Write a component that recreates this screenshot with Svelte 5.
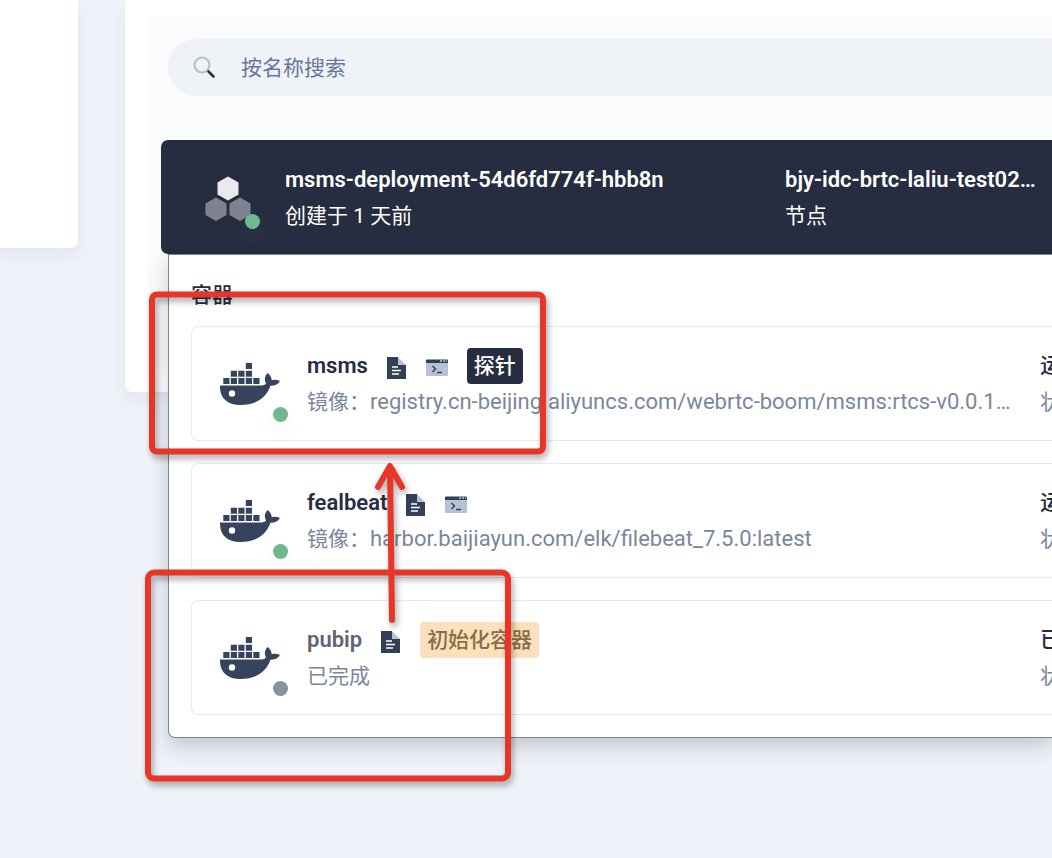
<script>
  const containers = [
    { name: 'msms', label: '镜像：', image: 'registry.cn-beijing.aliyuncs.com/webrtc-boom/msms:rtcs-v0.0.1…', terminal: true, tag: '探针', tone: 'dark', state: '运行中', done: false },
    { name: 'fealbeat', label: '镜像：', image: 'harbor.baijiayun.com/elk/filebeat_7.5.0:latest', terminal: true, tag: '', tone: '', state: '运行中', done: false },
    { name: 'pubip', label: '已完成', image: '', terminal: false, tag: '初始化容器', tone: 'warm', state: '已完成', done: true }
  ];
  let query = $state('');
</script>

<div class="page">
  <aside class="side"></aside>
  <main class="panel">
    <section class="list">
      <label class="search">
        <svg width="24" height="24" viewBox="0 0 24 24" aria-hidden="true">
          <circle cx="9" cy="9" r="7.500" fill="none" stroke="#b6bfca" stroke-width="2.200" />
          <path d="M15.500 15.500l5 5" stroke="#29323f" stroke-width="2.600" stroke-linecap="round" />
        </svg>
        <input type="text" placeholder="按名称搜索" aria-label="按名称搜索" bind:value={query} />
      </label>

      <article class="pod">
        <header class="pod-head">
          <div class="icon">
            <svg width="46" height="46" viewBox="0 0 46 46" aria-hidden="true">
              <path d="M23 1.500l10.500 6v12L23 25.500l-10.500-6v-12z" fill="#eaeaed" />
              <path d="M11 22.500l10.500 6V40L11 46 .5 40V28.500z" fill="#80838f" />
              <path d="M35 22.500l10.500 6V40L35 46l-10.500-6V28.500z" fill="#80838f" />
            </svg>
            <i class="dot"></i>
          </div>
          <div class="pod-cols">
            <div class="cell"><strong>msms-deployment-54d6fd774f-hbb8n</strong><p>创建于 1 天前</p></div>
            <div class="cell"><strong>bjy-idc-brtc-laliu-test02…</strong><p>节点</p></div>
          </div>
        </header>

        <div class="details">
          <h2>容器</h2>
          <ul>
            {#each containers as c}
              <li>
                <div class="icon whale">
                  <svg width="60" height="44" viewBox="0 0 60 44" fill="#36435c" aria-hidden="true">
                    <path d="M25.800 1h6.200v6h-6.200zM10.800 8.800H17v6h-6.200zM18.300 8.800h6.200v6h-6.200zM25.800 8.800h6.200v6h-6.200zM3.300 16h6.200v6H3.300zM10.800 16H17v6h-6.200zM18.300 16h6.200v6h-6.200zM25.800 16h6.200v6h-6.200zM33.300 16h6.200v6h-6.200z" />
                    <path d="M0 23.500H40c3 0 5-.5 6-2-2-3.500-1.500-7 1.500-10.500 2.800 2 4 4.200 4.200 7.200 3-.8 5.500-.5 8.300.8-2 3.300-5.300 4.800-9.500 4.800C46 36 36 43 20.500 43 7.500 43-.5 36 0 23.500z" />
                    <circle cx="12" cy="31.500" r="3.200" fill="#fff" />
                  </svg>
                  <i class="dot" class:done={c.done}></i>
                </div>
                <div class="cell info">
                  <div class="title">
                    <strong class:muted={c.done}>{c.name}</strong>
                    <button aria-label="容器日志">
                      <svg width="20" height="22" viewBox="0 0 20 22" aria-hidden="true">
                        <path d="M0 0h11v8h8v14H0z" fill="#324057" />
                        <path d="M11 0l8 8h-8z" fill="#b6c2d1" />
                        <path d="M5 10h6M5 13.500h9M5 17h7" stroke="#fff" stroke-width="1.600" />
                      </svg>
                    </button>
                    {#if c.terminal}
                      <button aria-label="终端">
                        <svg width="22" height="22" viewBox="0 0 22 22" aria-hidden="true">
                          <path d="M0 6h22v12a1 1 0 0 1-1 1H1a1 1 0 0 1-1-1z" fill="#b6c2d1" />
                          <path d="M1 2.500h20a1 1 0 0 1 1 1v2.500H0V3.500a1 1 0 0 1 1-1z" fill="#324057" />
                          <path d="M14 4h2M17 4h2M20 4h1" stroke="#b6c2d1" stroke-width="1.500" />
                          <path d="M6.500 9L9.500 12l-3 3M11 15.500h5" fill="none" stroke="#324057" stroke-width="1.400" />
                        </svg>
                      </button>
                    {/if}
                    {#if c.tag}<span class="tag {c.tone}">{c.tag}</span>{/if}
                  </div>
                  <p>{c.label}<span class="image">{c.image}</span></p>
                </div>
                <div class="cell status"><strong>{c.state}</strong><p>状态</p></div>
              </li>
            {/each}
          </ul>
        </div>
      </article>
    </section>
  </main>

  <svg class="marks" width="600" height="858" viewBox="0 0 600 858" aria-hidden="true">
    <rect x="152" y="294.500" width="391" height="157" rx="5" />
    <rect x="148" y="572.500" width="360" height="206" rx="6" />
    <path d="M392 620L390 467M378 487l12-21 12 21" />
  </svg>
</div>

<style>
  :global(body) { margin: 0; background: #eff2f8; }
  .page {
    position: relative;
    display: flex;
    align-items: flex-start;
    gap: 47px;
    min-height: 100vh;
    overflow: hidden;
    color: #242e42;
    font: 22px/36px Roboto, "Noto Sans CJK SC", sans-serif;
  }
  .side {
    flex: 0 0 78px;
    height: 248px;
    background: #fff;
    border-radius: 0 0 7px 0;
    box-shadow: 0 8px 16px rgba(36, 46, 66, .06);
  }
  .panel {
    flex: 1;
    min-width: 0;
    padding: 17px 0 23px 23px;
    box-sizing: border-box;
    background: #fff;
    border-radius: 0 0 0 7px;
    box-shadow: 0 8px 16px rgba(36, 46, 66, .06);
  }
  .list { padding: 22px 0 115px 13px; background: #fafbfd; }
  .search {
    display: flex;
    align-items: center;
    gap: 24px;
    height: 57px;
    margin-left: 7px;
    padding-left: 25px;
    border-radius: 29px 0 0 29px;
    background: #eff2f7;
  }
  input {
    flex: 1;
    min-width: 0;
    padding: 0;
    border: 0;
    outline: 0;
    background: none;
    color: #36435c;
    font: inherit;
    font-size: 21px;
  }
  input::placeholder { color: #68779a; opacity: 1; }
  .pod { position: relative; margin-top: 44px; }
  .pod-head {
    display: flex;
    align-items: center;
    height: 114px;
    padding: 2px 0 0 44px;
    box-sizing: border-box;
    border-radius: 7px 0 0 7px;
    background: #272d40;
    color: #fff;
  }
  .icon { position: relative; display: flex; flex: none; }
  .icon .dot {
    position: absolute;
    right: -9px;
    bottom: -8px;
    width: 15px;
    height: 15px;
    border-radius: 50%;
    background: #6fba8c;
    box-shadow: 0 8px 16px rgba(85, 188, 138, .1);
  }
  .whale .dot { right: -8px; bottom: -16px; }
  .icon .dot.done { background: #88919f; box-shadow: none; }
  .pod-cols {
    flex: 1;
    display: grid;
    grid-template-columns: minmax(0, 500fr) minmax(0, 267fr);
    margin-left: 34px;
  }
  .cell { min-width: 0; white-space: nowrap; }
  strong { display: block; font-weight: 600; }
  p { margin: 0; font-size: 21px; }
  .details {
    position: absolute;
    top: 114px;
    left: 7px;
    right: 0;
    padding: 22px 0 22px 22px;
    border: 1px solid #7e8494;
    border-right: 0;
    border-radius: 0 0 0 7px;
    box-sizing: border-box;
    background: #fff;
    box-shadow: 0 8px 20px rgba(36, 46, 66, .22);
  }
  h2 { margin: 0; font-size: 21px; line-height: 36px; font-weight: 500; }
  ul {
    display: grid;
    gap: 22px;
    margin: 13px 0 0;
    padding: 0;
    list-style: none;
  }
  li {
    display: flex;
    align-items: center;
    height: 115px;
    padding: 1px 0 0 28px;
    border: 1px solid #e7e9ed;
    border-right: 0;
    border-radius: 7px 0 0 7px;
    box-sizing: border-box;
  }
  .info { flex: 1; margin: 0 28px 0 27px; }
  .title { display: flex; align-items: center; height: 36px; }
  .muted { color: #5f6473; }
  li p { color: #79879c; }
  .image { font-size: 22px; }
  button {
    display: flex;
    margin-left: 19px;
    padding: 4px 0 0;
    border: 0;
    background: none;
  }
  .tag {
    margin-left: 19px;
    padding: 0 7px;
    border-radius: 4px;
    font-size: 21px;
    font-weight: 500;
  }
  .dark { background: #272d40; color: #fff; }
  .warm { background: #fbe0be; color: #8a6d45; }
  .status { flex: 0 0 12px; }
  .status strong { font-weight: 500; }
  .marks {
    position: absolute;
    top: 0;
    left: 0;
    fill: none;
    stroke: #e93528;
    stroke-width: 6;
    stroke-linecap: round;
    stroke-linejoin: round;
    pointer-events: none;
    filter: drop-shadow(2px 4px 3px rgba(0, 0, 0, .35));
  }
</style>
